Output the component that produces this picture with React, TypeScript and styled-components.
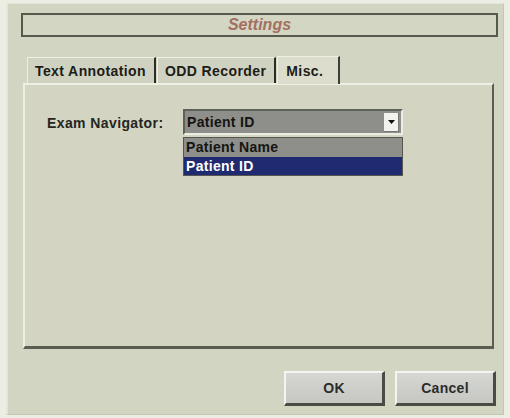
import React, { useState } from 'react'
import styled, { createGlobalStyle } from 'styled-components'

const GlobalStyle = createGlobalStyle`
  html, body {
    margin: 0;
    padding: 0;
    background: #eceee4;
  }
  body {
    font-family: "Liberation Sans", Arial, sans-serif;
  }
`

const Window = styled.div`
  width: 498px;
  height: 412px;
  margin: 3px 0 0 6px;
  box-sizing: border-box;
  background: #d3d5c3;
  border-left: 2px solid #e4e6d8;
  border-top: 1px solid #e4e6d8;
  border-right: 1px solid #c4c6b4;
  border-bottom: 1px solid #c4c6b4;
  padding: 9px 5px 0 13px;
  display: flex;
  flex-direction: column;
`

const TitleBar = styled.div`
  height: 24px;
  box-sizing: border-box;
  border: 2px solid #555a4c;
  display: flex;
  align-items: center;
  justify-content: center;
  font-style: italic;
  font-weight: bold;
  font-size: 16px;
  color: #a2705f;
  background: #d4d6c4;
`

const TabRow = styled.div`
  display: flex;
  align-items: flex-end;
  margin: 18px 0 0 6px;
  height: 28px;
`

const Tab = styled.div<{ $active?: boolean }>`
  height: ${(p) => (p.$active ? 28 : 26)}px;
  box-sizing: border-box;
  padding: 0 ${(p) => (p.$active ? 15 : 8)}px 0 ${(p) => (p.$active ? 8 : 7)}px;
  display: flex;
  align-items: center;
  font-weight: bold;
  font-size: 14px;
  letter-spacing: 0.4px;
  color: #1c1c18;
  background: ${(p) => (p.$active ? '#dcddcd' : '#d0d2c1')};
  border-top: 1px solid #eef0e4;
  border-left: 1px solid #eef0e4;
  border-right: 2px solid ${(p) => (p.$active ? '#3c3f36' : '#2a2c26')};
  margin-right: 1px;
  position: relative;
  z-index: ${(p) => (p.$active ? 1 : 0)};
  margin-bottom: ${(p) => (p.$active ? -1 : 0)}px;
  cursor: default;
`

const Panel = styled.div`
  width: 471px;
  height: 266px;
  box-sizing: border-box;
  margin-left: 2px;
  background: #d3d5c2;
  border-top: 2px solid #eef0e4;
  border-left: 2px solid #eef0e4;
  border-right: 2px solid #5a5e52;
  border-bottom: 3px solid #5a5e52;
  padding: 24px 0 0 22px;
`

const FieldRow = styled.div`
  display: flex;
  align-items: flex-start;
`

const Label = styled.div`
  width: 136px;
  font-weight: bold;
  font-size: 14px;
  letter-spacing: 0.4px;
  color: #24251f;
  padding-top: 6px;
`

const SelectWrap = styled.div`
  width: 220px;
  display: flex;
  flex-direction: column;
  gap: 2px;
`

const SelectBox = styled.div`
  height: 26px;
  box-sizing: border-box;
  background: #8e8e8a;
  border-top: 2px solid #5e605a;
  border-left: 2px solid #5e605a;
  border-right: 2px solid #eceee4;
  border-bottom: 2px solid #eceee4;
  display: flex;
  align-items: center;
  padding-left: 2px;
  font-weight: bold;
  font-size: 14px;
  letter-spacing: 0.3px;
  color: #151512;
`

const SelectText = styled.span`
  flex: 1;
`

const ArrowButton = styled.div`
  width: 14px;
  height: 18px;
  margin-right: 2px;
  background: #f2f2ee;
  border-right: 1px solid #7a7a74;
  border-bottom: 1px solid #7a7a74;
  display: flex;
  align-items: center;
  justify-content: center;
`

const List = styled.div`
  border: 1px solid #55574f;
  background: #8e8e8a;
  box-sizing: border-box;
`

const Option = styled.div<{ $selected?: boolean }>`
  height: 18.5px;
  display: flex;
  align-items: center;
  padding-left: 2px;
  font-weight: bold;
  font-size: 14px;
  letter-spacing: 0.3px;
  color: ${(p) => (p.$selected ? '#ffffff' : '#151512')};
  background: ${(p) => (p.$selected ? '#202a70' : '#8e8e8a')};
`

const Footer = styled.div`
  display: flex;
  justify-content: flex-end;
  gap: 10px;
  margin-top: 22px;
  padding-right: 2px;
`

const Button = styled.button`
  width: 101px;
  height: 35px;
  box-sizing: border-box;
  background: linear-gradient(#d6d6d4, #c6c6c2);
  border-top: 2px solid #f4f4f0;
  border-left: 2px solid #f4f4f0;
  border-right: 3px solid #4a4c44;
  border-bottom: 3px solid #4a4c44;
  font-family: "Liberation Sans", Arial, sans-serif;
  font-weight: bold;
  font-size: 14px;
  letter-spacing: 0.3px;
  color: #2c2d2a;
  padding: 0;
  cursor: pointer;
`

const tabs = ['Text Annotation', 'ODD Recorder', 'Misc.']
const options = ['Patient Name', 'Patient ID']

export default function App() {
  const [tab, setTab] = useState('Misc.')
  const [value, setValue] = useState('Patient ID')

  return (
    <>
      <GlobalStyle />
      <Window>
        <TitleBar>Settings</TitleBar>
        <TabRow>
          {tabs.map((t) => (
            <Tab key={t} $active={tab === t} onClick={() => setTab(t)}>
              {t}
            </Tab>
          ))}
        </TabRow>
        <Panel>
          <FieldRow>
            <Label>Exam Navigator:</Label>
            <SelectWrap>
              <SelectBox>
                <SelectText>{value}</SelectText>
                <ArrowButton>
                  <svg width="7" height="4" viewBox="0 0 7 4">
                    <path d="M0 0 H7 L3.5 4 Z" fill="#111" />
                  </svg>
                </ArrowButton>
              </SelectBox>
              <List>
                {options.map((o) => (
                  <Option key={o} $selected={value === o} onClick={() => setValue(o)}>
                    {o}
                  </Option>
                ))}
              </List>
            </SelectWrap>
          </FieldRow>
        </Panel>
        <Footer>
          <Button>OK</Button>
          <Button>Cancel</Button>
        </Footer>
      </Window>
    </>
  )
}
